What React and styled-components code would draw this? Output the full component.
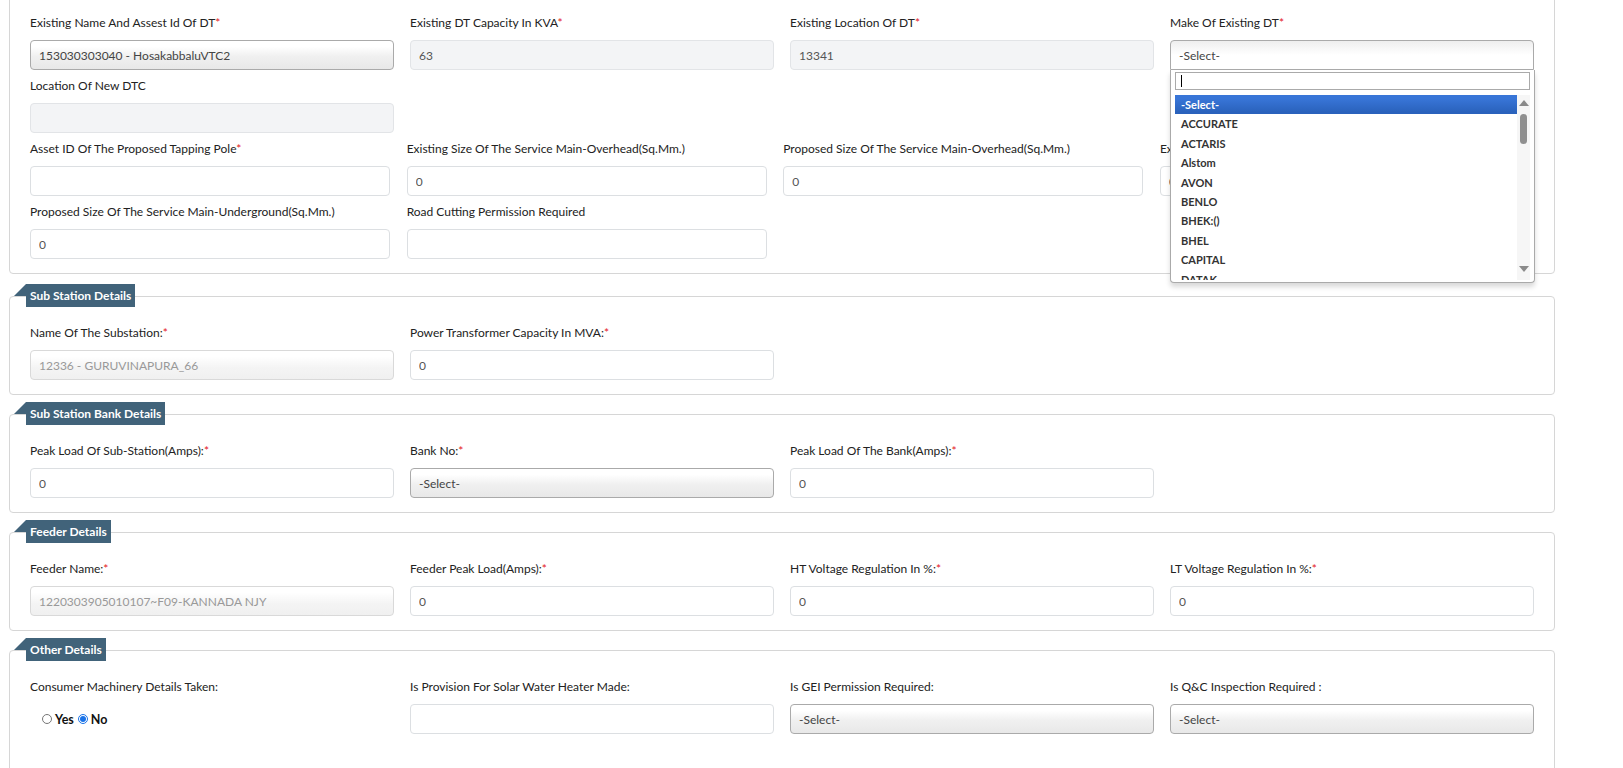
import React from "react";
import styled, { createGlobalStyle } from "styled-components";

const GlobalStyle = createGlobalStyle`
  html, body {
    margin: 0;
    background: #fff;
    font-family: Lato, "Open Sans", "Liberation Sans", sans-serif;
    color: #333;
    overflow: hidden;
  }
  * { box-sizing: border-box; }
`;

const Viewport = styled.div`
  height: 768px;
  overflow: hidden;
`;

const Page = styled.div`
  width: 1555px;
  padding-left: 9px;
  margin-top: -14px;
`;

const Section = styled.div`
  position: relative;
  border: 1px solid #d6d6d6;
  border-radius: 4px;
  padding: 27px 20px 14px;
  margin-bottom: ${(p) => (p.$first ? "22px" : "19px")};
`;

const Legend = styled.div`
  position: absolute;
  top: -13px;
  left: 16px;
  height: 23px;
  padding: 0 4px;
  background: #41637a;
  color: #fff;
  font-weight: 700;
  font-size: 12px;
  line-height: 23px;
  white-space: nowrap;

  &::before {
    content: "";
    position: absolute;
    left: -12px;
    top: 0;
    border-bottom: 12px solid #41637a;
    border-left: 12px solid transparent;
  }
`;

const Grid = styled.div`
  display: grid;
  grid-template-columns: repeat(4, 1fr);
  column-gap: ${(p) => (p.$narrow ? "16.5px" : "16px")};
  row-gap: 7px;
  width: ${(p) => (p.$narrow ? "1490px" : "auto")};
  margin-top: ${(p) => (p.$spaced ? "7px" : "0")};
`;

const Field = styled.div`
  position: relative;
  min-width: 0;
`;

const Label = styled.div`
  font-size: 12px;
  line-height: 18px;
  margin-bottom: 8px;
  color: #222;
  white-space: nowrap;
`;

const Req = styled.span`
  color: #e4161b;
`;

const TextInput = styled.input`
  display: block;
  width: 100%;
  height: 30px;
  padding: 0 8px;
  border: 1px solid ${(p) => (p.disabled ? "#e2e4e7" : "#dcdfe2")};
  border-radius: 4px;
  background: ${(p) => (p.disabled ? "#f3f4f6" : "#fff")};
  color: #555;
  font-family: inherit;
  font-size: 12px;
  outline: none;
`;

const SelectBox = styled.div`
  height: 30px;
  padding: 0 8px;
  display: flex;
  align-items: center;
  border: 1px solid ${(p) => (p.$disabled ? "#d9d9d9" : "#aaa")};
  border-radius: ${(p) => (p.$open ? "4px 4px 0 0" : "4px")};
  background: ${(p) =>
    p.$open
      ? "linear-gradient(to bottom, #eee 0%, #fff 50%)"
      : p.$disabled
      ? "linear-gradient(to bottom, #fff 20%, #f4f4f4 60%, #f0f0f0 100%)"
      : "linear-gradient(to bottom, #fff 20%, #f0f0f0 55%, #e8e8e8 100%)"};
  color: ${(p) => (p.$disabled ? "#999" : "#444")};
  font-size: 12px;
  white-space: nowrap;
  overflow: hidden;
`;

const Dropdown = styled.div`
  position: absolute;
  top: 100%;
  left: 0;
  width: calc(100% + 1px);
  height: 213px;
  z-index: 10;
  background: #fff;
  border: 1px solid #aaa;
  border-top: 0;
  border-radius: 0 0 4px 4px;
  box-shadow: 0 4px 5px rgba(0, 0, 0, 0.15);
  padding: 2px 4px 0;
`;

const Search = styled.div`
  height: 18px;
  border: 1px solid #aaa;
  padding: 2px 5px;
  display: flex;
  align-items: center;
`;

const Caret = styled.span`
  width: 1px;
  height: 12px;
  background: #000;
`;

const ListWrap = styled.div`
  margin-top: 5px;
  height: 185px;
  display: flex;
  overflow: hidden;
`;

const List = styled.ul`
  list-style: none;
  margin: 0;
  padding: 0;
  flex: 1;
`;

const Option = styled.li`
  height: 19.4px;
  line-height: 19.4px;
  padding: 0 6px;
  font-size: 11px;
  font-weight: 700;
  color: ${(p) => (p.$active ? "#fff" : "#333")};
  background: ${(p) =>
    p.$active ? "linear-gradient(to bottom, #3875d7 20%, #2a62bc 90%)" : "transparent"};
`;

const ScrollTrack = styled.div`
  position: relative;
  width: 13px;
  background: #f6f6f6;
`;

const Arrow = styled.span`
  position: absolute;
  left: 2px;
  ${(p) => (p.$down ? "bottom: 8px;" : "top: 5px;")}
  border-left: 5px solid transparent;
  border-right: 5px solid transparent;
  ${(p) => (p.$down ? "border-top: 6px solid #8a8a8a;" : "border-bottom: 6px solid #8a8a8a;")}
`;

const Thumb = styled.span`
  position: absolute;
  left: 3px;
  top: 19px;
  width: 7px;
  height: 30px;
  border-radius: 4px;
  background: #8f8f8f;
`;

const RadioRow = styled.div`
  display: flex;
  align-items: center;
  height: 30px;
  padding-left: 12px;
  font-size: 12.5px;
  font-weight: 700;
  color: #111;
`;

const RadioLabel = styled.label`
  display: flex;
  align-items: center;
  gap: 3px;
  margin-right: 4px;
`;

const Radio = styled.input`
  width: 10px;
  height: 10px;
  margin: 0;
  accent-color: #1a73e8;
`;

const makes = [
  "ACCURATE",
  "ACTARIS",
  "Alstom",
  "AVON",
  "BENLO",
  "BHEK:()",
  "BHEL",
  "CAPITAL",
  "DATAK",
  "EASUN",
];

function L({ text, req }) {
  return (
    <Label>
      {text}
      {req && <Req>*</Req>}
    </Label>
  );
}

function InputField({ label, req, value = "", disabled }) {
  return (
    <Field>
      <L text={label} req={req} />
      <TextInput defaultValue={value} disabled={disabled} readOnly />
    </Field>
  );
}

function SelectField({ label, req, value = "-Select-", disabled, children, open }) {
  return (
    <Field>
      <L text={label} req={req} />
      <div style={{ position: "relative" }}>
        <SelectBox $disabled={disabled} $open={open}>
          {value}
        </SelectBox>
        {children}
      </div>
    </Field>
  );
}

function MakeDropdown() {
  return (
    <Dropdown>
      <Search>
        <Caret />
      </Search>
      <ListWrap>
        <List>
          <Option $active>-Select-</Option>
          {makes.map((m) => (
            <Option key={m}>{m}</Option>
          ))}
        </List>
        <ScrollTrack>
          <Arrow />
          <Thumb />
          <Arrow $down />
        </ScrollTrack>
      </ListWrap>
    </Dropdown>
  );
}

export default function App() {
  return (
    <Viewport>
      <GlobalStyle />
      <Page>
        <Section $first>
          <Grid>
            <SelectField
              label="Existing Name And Assest Id Of DT"
              req
              value="153030303040 - HosakabbaluVTC2"
            />
            <InputField label="Existing DT Capacity In KVA" req value="63" disabled />
            <InputField label="Existing Location Of DT" req value="13341" disabled />
            <SelectField label="Make Of Existing DT" req open>
              <MakeDropdown />
            </SelectField>
            <InputField label="Location Of New DTC" disabled />
          </Grid>
          <Grid $narrow $spaced>
            <InputField label="Asset ID Of The Proposed Tapping Pole" req />
            <InputField label="Existing Size Of The Service Main-Overhead(Sq.Mm.)" value="0" />
            <InputField label="Proposed Size Of The Service Main-Overhead(Sq.Mm.)" value="0" />
            <InputField label="Existing Size Of The Service Main-Underground(Sq.Mm.)" value="0" />
            <InputField label="Proposed Size Of The Service Main-Underground(Sq.Mm.)" value="0" />
            <InputField label="Road Cutting Permission Required" />
          </Grid>
        </Section>

        <Section>
          <Legend>Sub Station Details</Legend>
          <Grid>
            <SelectField
              label="Name Of The Substation:"
              req
              value="12336 - GURUVINAPURA_66"
              disabled
            />
            <InputField label="Power Transformer Capacity In MVA:" req value="0" />
          </Grid>
        </Section>

        <Section>
          <Legend>Sub Station Bank Details</Legend>
          <Grid>
            <InputField label="Peak Load Of Sub-Station(Amps):" req value="0" />
            <SelectField label="Bank No:" req />
            <InputField label="Peak Load Of The Bank(Amps):" req value="0" />
          </Grid>
        </Section>

        <Section>
          <Legend>Feeder Details</Legend>
          <Grid>
            <SelectField
              label="Feeder Name:"
              req
              value="1220303905010107~F09-KANNADA NJY"
              disabled
            />
            <InputField label="Feeder Peak Load(Amps):" req value="0" />
            <InputField label="HT Voltage Regulation In %:" req value="0" />
            <InputField label="LT Voltage Regulation In %:" req value="0" />
          </Grid>
        </Section>

        <Section>
          <Legend>Other Details</Legend>
          <Grid>
            <Field>
              <L text="Consumer Machinery Details Taken:" />
              <RadioRow>
                <RadioLabel>
                  <Radio type="radio" name="machinery" />
                  Yes
                </RadioLabel>
                <RadioLabel>
                  <Radio type="radio" name="machinery" defaultChecked />
                  No
                </RadioLabel>
              </RadioRow>
            </Field>
            <InputField label="Is Provision For Solar Water Heater Made:" />
            <SelectField label="Is GEI Permission Required:" />
            <SelectField label="Is Q&C Inspection Required :" />
          </Grid>
          <div style={{ height: 40 }} />
        </Section>
      </Page>
    </Viewport>
  );
}
